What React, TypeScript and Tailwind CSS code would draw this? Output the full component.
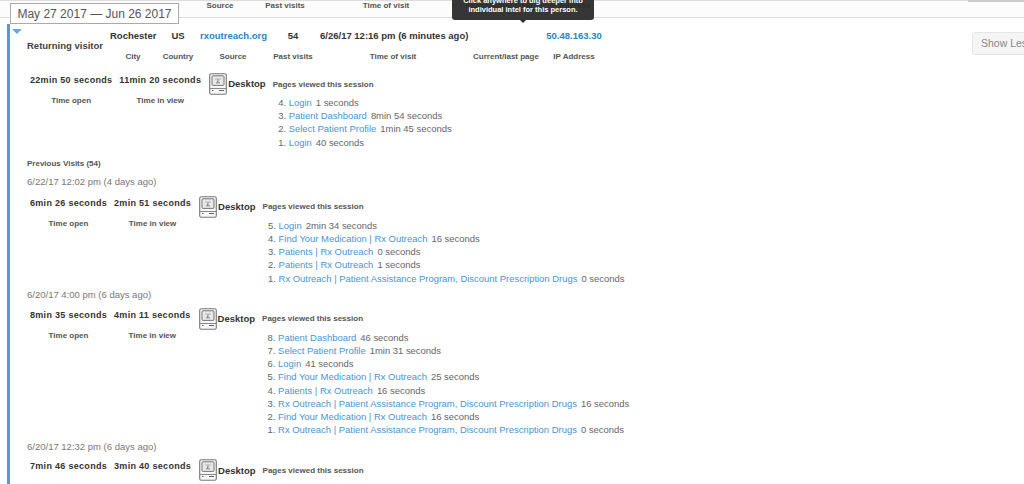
const FONT = "[font-family:'Liberation_Sans',Arial,sans-serif]";

type Page = { title: string; time: string };

function MacIcon() {
  return (
    <svg width="18" height="22" viewBox="0 0 18 22" fill="none" className="shrink-0">
      <rect x="0.7" y="0.7" width="16.6" height="20.6" rx="1.6" fill="#f6f6f6" stroke="#777" strokeWidth="1.1" />
      <rect x="3" y="2.8" width="12" height="9.6" rx="1" fill="#e8e8e8" stroke="#777" />
      <path d="M7 5.5v1M11 5.5v1M9 5.5v3H8M7 9.8h4" stroke="#666" strokeWidth="0.8" />
      <path d="M1 15.5h16" stroke="#888" />
      <path d="M10 17.5h5M3 17.5h1.5" stroke="#666" />
    </svg>
  );
}

function Session({ open, view, pages, className }: { open: string; view: string; pages: Page[]; className?: string }) {
  return (
    <div className={`flex items-start ${className ?? ""}`}>
      <div className="shrink-0 text-center whitespace-nowrap">
        <div className="h-[14px] text-[9px] leading-[14px] font-bold tracking-[0.3px] text-[#333]">{open}</div>
        {pages.length > 0 && <div className="mt-[7px] text-[8px] leading-[14px] font-bold text-[#555]">Time open</div>}
      </div>
      <div className="ml-[7px] shrink-0 text-center whitespace-nowrap">
        <div className="h-[14px] text-[9px] leading-[14px] font-bold tracking-[0.3px] text-[#333]">{view}</div>
        {pages.length > 0 && <div className="mt-[7px] text-[8px] leading-[14px] font-bold text-[#555]">Time in view</div>}
      </div>
      <div className="ml-[8px]">
        <div className="flex h-[22px] items-center">
          <MacIcon />
          <span className="ml-[1px] pt-[1px] text-[9.5px] font-bold text-[#333]">Desktop</span>
          <span className="ml-[7px] pt-[1px] text-[8px] font-bold text-[#555]">Pages viewed this session</span>
        </div>
        <ol className="mt-[1px] ml-[69px] text-[9.45px] leading-[13.2px] whitespace-nowrap text-[#666]">
          {pages.map((p, i) => (
            <li key={i} className="flex">
              <span className="w-[10.5px]">{pages.length - i}.</span>
              <a className="text-[#4a94d2]">{p.title}</a>
              <span className="ml-[4px]">{p.time}</span>
            </li>
          ))}
        </ol>
      </div>
    </div>
  );
}

export default function App() {
  return (
    <div className={`relative h-[484px] w-[1024px] overflow-hidden bg-white ${FONT}`}>
      {/* row above, scrolled mostly out of view */}
      <div className="grid h-[18px] grid-cols-[60px_70px_132px_96px_44px] border-t border-b border-[#ddd] bg-[#fcfcfc] pl-[190px] text-center text-[8px] leading-[9px] font-bold whitespace-nowrap text-[#555]">
        <span>Source</span>
        <span>Past visits</span>
        <span>Time of visit</span>
        <span>Current/last page</span>
        <span>IP Address</span>
      </div>

      <div className="mt-[6px] ml-[7px] border-l-[3px] border-[#5597e2] pb-4">
        <div className="relative h-[40px]">
          <div className="absolute top-[5px] left-[2px] h-0 w-0 border-x-[5px] border-t-[5px] border-x-transparent border-t-[#6aa5e0]" />
          <div className="grid grid-cols-[46px_44px_66px_54px_146px_80px_56px] pt-[6px] pl-[100px] text-center text-[9.5px] leading-[12px] font-bold whitespace-nowrap text-[#333]">
            <span>Rochester</span>
            <span>US</span>
            <span className="text-[#1f86c9]">rxoutreach.org</span>
            <span>54</span>
            <span>6/26/17 12:16 pm (6 minutes ago)</span>
            <span />
            <span className="text-[#1f86c9]">50.48.163.30</span>
          </div>
          <div className="mt-[-3px] ml-[17px] text-[9.5px] leading-[14px] font-bold text-[#444]">Returning visitor</div>
        </div>
        <div className="mt-[-12px] grid grid-cols-[46px_44px_66px_54px_146px_80px_56px] pl-[100px] text-center text-[8px] leading-[10px] font-bold whitespace-nowrap text-[#555]">
          <span>City</span>
          <span>Country</span>
          <span>Source</span>
          <span>Past visits</span>
          <span>Time of visit</span>
          <span>Current/last page</span>
          <span>IP Address</span>
        </div>

        <Session
          className="mt-[11px] pl-[20px]"
          open="22min 50 seconds"
          view="11min 20 seconds"
          pages={[
            { title: "Login", time: "1 seconds" },
            { title: "Patient Dashboard", time: "8min 54 seconds" },
            { title: "Select Patient Profile", time: "1min 45 seconds" },
            { title: "Login", time: "40 seconds" },
          ]}
        />

        <div className="mt-[9px] ml-[17px] text-[8px] leading-[12px] font-bold text-[#555]">Previous Visits (54)</div>

        <div className="mt-[5px] ml-[17px] text-[9.5px] leading-[14px] text-[#777]">6/22/17 12:02 pm (4 days ago)</div>
        <Session
          className="mt-[7px] pl-[20px]"
          open="6min 26 seconds"
          view="2min 51 seconds"
          pages={[
            { title: "Login", time: "2min 34 seconds" },
            { title: "Find Your Medication | Rx Outreach", time: "16 seconds" },
            { title: "Patients | Rx Outreach", time: "0 seconds" },
            { title: "Patients | Rx Outreach", time: "1 seconds" },
            { title: "Rx Outreach | Patient Assistance Program, Discount Prescription Drugs", time: "0 seconds" },
          ]}
        />

        <div className="mt-[3px] ml-[17px] text-[9.5px] leading-[14px] text-[#777]">6/20/17 4:00 pm (6 days ago)</div>
        <Session
          className="mt-[6px] pl-[20px]"
          open="8min 35 seconds"
          view="4min 11 seconds"
          pages={[
            { title: "Patient Dashboard", time: "46 seconds" },
            { title: "Select Patient Profile", time: "1min 31 seconds" },
            { title: "Login", time: "41 seconds" },
            { title: "Find Your Medication | Rx Outreach", time: "25 seconds" },
            { title: "Patients | Rx Outreach", time: "16 seconds" },
            { title: "Rx Outreach | Patient Assistance Program, Discount Prescription Drugs", time: "16 seconds" },
            { title: "Find Your Medication | Rx Outreach", time: "16 seconds" },
            { title: "Rx Outreach | Patient Assistance Program, Discount Prescription Drugs", time: "0 seconds" },
          ]}
        />

        <div className="mt-[4px] ml-[17px] text-[9.5px] leading-[14px] text-[#777]">6/20/17 12:32 pm (6 days ago)</div>
        <Session className="mt-[5px] pl-[20px]" open="7min 46 seconds" view="3min 40 seconds" pages={[]} />
      </div>

      {/* overlays */}
      <div className="absolute top-[3px] left-[10px] flex h-[21px] w-[169px] items-center justify-center border border-[#aaa] bg-white text-[12px] whitespace-nowrap text-[#555]">
        May 27 2017 — Jun 26 2017
      </div>

      <div className="absolute top-0 left-[452px] flex h-[20px] w-[142px] flex-col justify-end rounded-b-[3px] bg-[#2b2b2b]/95 pb-[6px] text-center text-[7.5px] leading-[9px] font-bold whitespace-nowrap text-white">
        <span>Click anywhere to dig deeper into</span>
        <span>individual intel for this person.</span>
        <div className="absolute top-[20px] left-[68px] h-0 w-0 border-x-[3px] border-t-[3px] border-x-transparent border-t-[#2b2b2b]" />
      </div>

      <div className="absolute top-0 left-[968px] h-[2px] w-[56px] bg-[#ccc]" />
      <div className="absolute top-[32px] left-[972px] flex h-[23px] w-[60px] items-center rounded-[3px] border border-[#e5e5e5] bg-[#f5f5f5] pl-[8px] text-[10.5px] whitespace-nowrap text-[#888]">
        Show Less
      </div>
    </div>
  );
}
